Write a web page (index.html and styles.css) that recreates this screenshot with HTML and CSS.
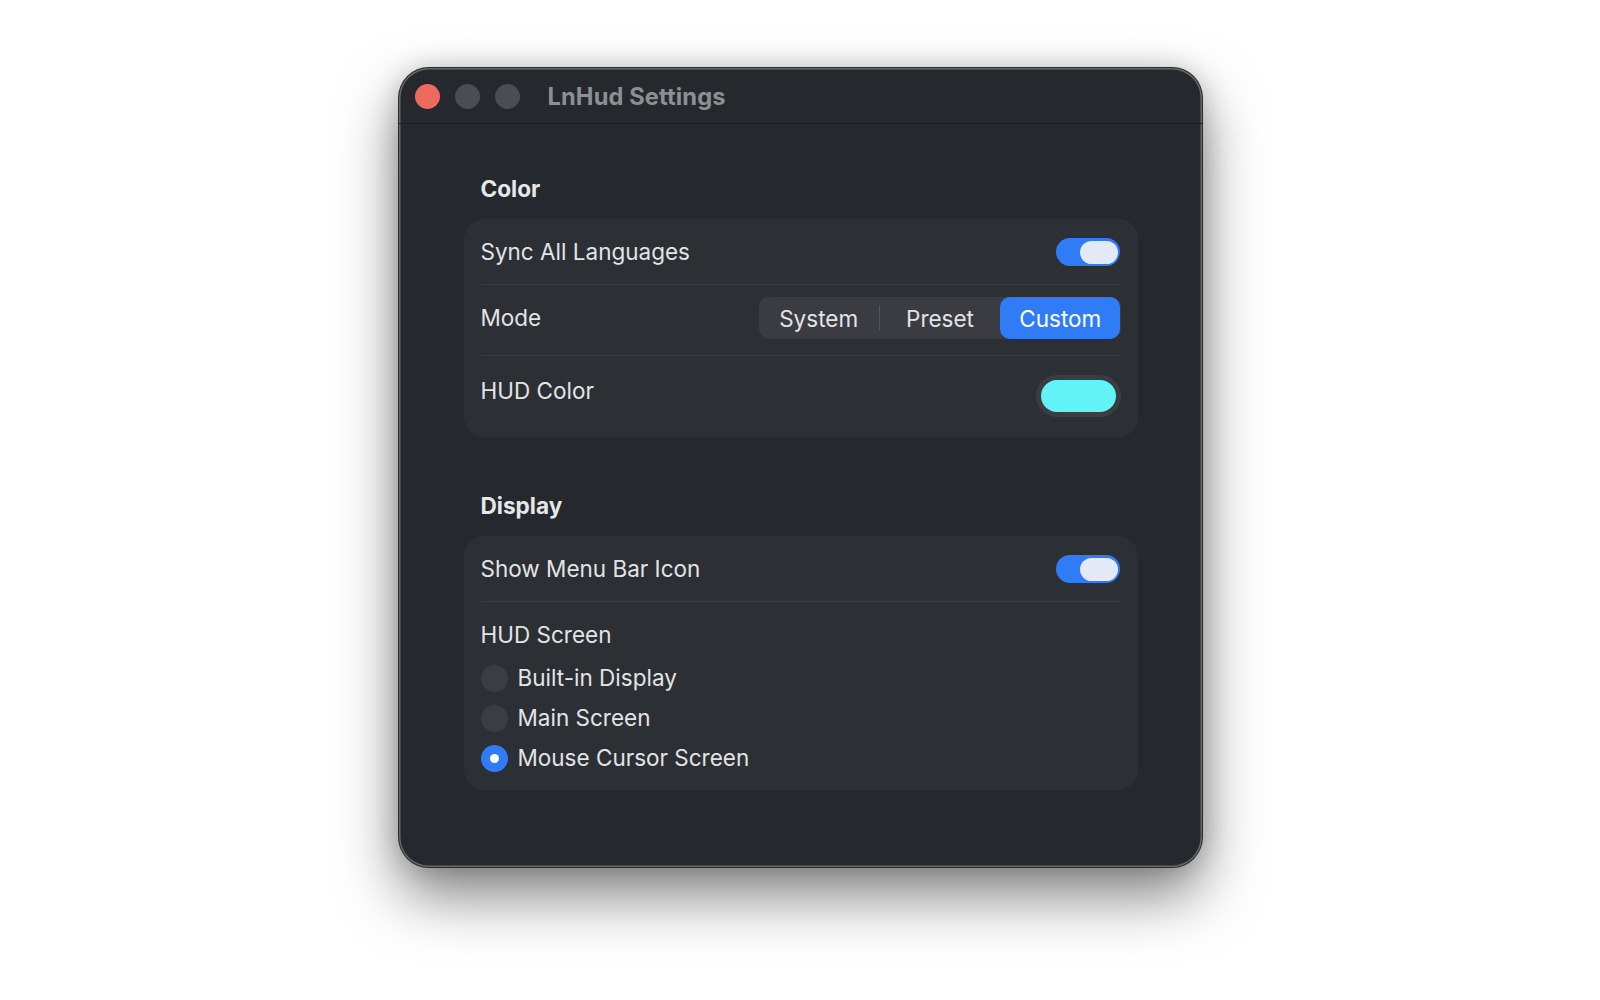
FILE: index.html
```html
<!DOCTYPE html>
<html lang="en">
<head>
<meta charset="utf-8">
<title>LnHud Settings</title>
<link rel="stylesheet" href="styles.css">
</head>
<body>
  <div class="window">
    <header class="titlebar">
      <div class="lights">
        <span class="light light-close"></span>
        <span class="light"></span>
        <span class="light"></span>
      </div>
      <div class="title">LnHud Settings</div>
    </header>

    <main class="content">
      <section class="group">
        <h2 class="group-title">Color</h2>
        <div class="card">
          <div class="row row-toggle">
            <span class="label">Sync All Languages</span>
            <span class="switch is-on"><span class="knob"></span></span>
          </div>
          <div class="sep"></div>
          <div class="row row-mode">
            <span class="label">Mode</span>
            <div class="segmented">
              <span class="seg">System</span>
              <span class="seg-divider"></span>
              <span class="seg">Preset</span>
              <span class="seg is-selected">Custom</span>
            </div>
          </div>
          <div class="sep"></div>
          <div class="row row-color">
            <span class="label label-raised">HUD Color</span>
            <span class="colorwell"><span class="swatch"></span></span>
          </div>
        </div>
      </section>

      <section class="group group-display">
        <h2 class="group-title">Display</h2>
        <div class="card">
          <div class="row row-toggle">
            <span class="label">Show Menu Bar Icon</span>
            <span class="switch is-on"><span class="knob"></span></span>
          </div>
          <div class="sep"></div>
          <div class="radio-group">
            <div class="label radio-heading">HUD Screen</div>
            <div class="radio"><span class="dot"></span><span class="label">Built-in Display</span></div>
            <div class="radio"><span class="dot"></span><span class="label">Main Screen</span></div>
            <div class="radio"><span class="dot is-checked"></span><span class="label">Mouse Cursor Screen</span></div>
          </div>
        </div>
      </section>
    </main>
  </div>
</body>
</html>
```

FILE: styles.css
```css
* {
  box-sizing: border-box;
}

html, body {
  margin: 0;
  padding: 0;
  background: #ffffff;
}

body {
  width: 1600px;
  height: 1000px;
  padding-top: 68px;
  font-family: "Inter", "Noto Sans", "Liberation Sans", sans-serif;
  overflow: hidden;
}

/* window frame */
.window {
  width: 803px;
  height: 799px;
  margin: 0 auto;
  background: #25282c;
  border-radius: 30px;
  box-shadow:
    0 0 0 1px #2a2b2d,
    inset 0 0 0 1.5px #66686b,
    0 28px 60px rgba(0, 0, 0, 0.5),
    0 0 26px rgba(0, 0, 0, 0.18);
  overflow: hidden;
}

.titlebar {
  height: 56px;
  display: flex;
  align-items: center;
  padding: 2px 0 0 16px;
  border-bottom: 1px solid #1d1f22;
}

.lights {
  display: flex;
  gap: 15px;
}

.light {
  width: 25px;
  height: 25px;
  border-radius: 50%;
  background: #4a4d51;
}

.light-close {
  background: #ee6a5f;
}

.title {
  margin-left: 28px;
  font-size: 23.7px;
  font-weight: 700;
  color: #8d8f93;
  letter-spacing: 0.1px;
}

/* content */
.content {
  padding: 51px 64px 0 65px;
}

.group-display {
  margin-top: 55px;
}

.group-title {
  margin: 0 0 16px;
  padding-left: 17px;
  height: 28px;
  line-height: 28px;
  font-size: 22.6px;
  font-weight: 700;
  color: #e6e7e9;
}

.card {
  background: #2c2f34;
  border-radius: 20px;
  padding: 0 17px;
}

.label {
  font-size: 22.5px;
  line-height: 28px;
  color: #e3e4e6;
}

.row {
  display: flex;
  align-items: center;
  justify-content: space-between;
}

.row-toggle {
  padding: 19px 0 18px;
}

.row-mode {
  padding: 12px 0 16px;
}

.row-color {
  padding: 19px 0 20px;
}

.label-raised {
  margin-bottom: 10px;
}

.sep {
  height: 1px;
  background: #393c41;
}

/* toggle switch */
.switch {
  width: 64px;
  height: 28px;
  margin-right: 1px;
  border-radius: 14px;
  background: #3a3c41;
  display: flex;
  align-items: center;
  padding: 0 2px;
}

.switch.is-on {
  background: #2f7cf6;
  justify-content: flex-end;
}

.knob {
  width: 38px;
  height: 23px;
  border-radius: 12px;
  background: #e4e9f7;
}

/* segmented control */
.segmented {
  width: 362px;
  height: 42px;
  border-radius: 10px;
  background: #3a3c41;
  display: flex;
  align-items: center;
}

.seg {
  flex: 1;
  height: 42px;
  display: flex;
  align-items: center;
  justify-content: center;
  font-size: 22.5px;
  color: #e3e4e6;
  border-radius: 10px;
}

.seg.is-selected {
  background: #2f7cf6;
  color: #ffffff;
}

.seg-divider {
  width: 1px;
  height: 26px;
  background: #515358;
}

/* color well */
.colorwell {
  width: 85px;
  height: 42px;
  border-radius: 21px;
  background: #3b3d42;
  padding: 5px;
  display: flex;
}

.swatch {
  flex: 1;
  border-radius: 16px;
  background: #62f3f7;
}

/* radio group */
.radio-group {
  padding: 19px 0 12px;
}

.radio-heading {
  margin-bottom: 9px;
}

.radio {
  height: 40px;
  display: flex;
  align-items: center;
  gap: 10px;
}

.dot {
  width: 27px;
  height: 27px;
  border-radius: 50%;
  background: #3b3d42;
  display: flex;
  align-items: center;
  justify-content: center;
}

.dot.is-checked {
  background: #2f7cf6;
}

.dot.is-checked::after {
  content: "";
  width: 9px;
  height: 9px;
  border-radius: 50%;
  background: #ffffff;
}
```
